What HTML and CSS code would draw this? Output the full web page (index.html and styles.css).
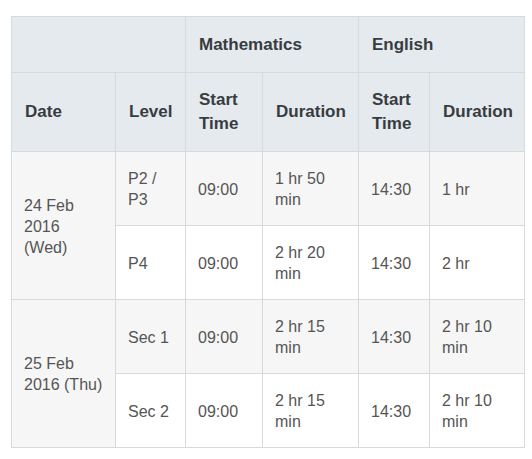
FILE: index.html
```html
<!DOCTYPE html>
<html>
<head>
<meta charset="utf-8">
<link rel="stylesheet" href="styles.css">
</head>
<body>
<div class="wrap">
<table class="schedule">
  <colgroup>
    <col class="c-date"><col class="c-level"><col class="c-start"><col class="c-dur"><col class="c-start2"><col class="c-dur2">
  </colgroup>
  <thead>
    <tr class="top">
      <th colspan="2"></th>
      <th colspan="2">Mathematics</th>
      <th colspan="2">English</th>
    </tr>
    <tr class="sub">
      <th>Date</th>
      <th>Level</th>
      <th>Start Time</th>
      <th class="nw">Duration</th>
      <th>Start Time</th>
      <th class="nw">Duration</th>
    </tr>
  </thead>
  <tbody>
    <tr class="odd">
      <td rowspan="2">24 Feb 2016 (Wed)</td>
      <td>P2 / P3</td>
      <td>09:00</td>
      <td>1 hr 50 min</td>
      <td>14:30</td>
      <td>1 hr</td>
    </tr>
    <tr class="even">
      <td>P4</td>
      <td>09:00</td>
      <td>2 hr 20 min</td>
      <td>14:30</td>
      <td>2 hr</td>
    </tr>
    <tr class="odd">
      <td rowspan="2">25 Feb 2016 (Thu)</td>
      <td>Sec 1</td>
      <td>09:00</td>
      <td>2 hr 15 min</td>
      <td>14:30</td>
      <td>2 hr 10 min</td>
    </tr>
    <tr class="even">
      <td>Sec 2</td>
      <td>09:00</td>
      <td>2 hr 15 min</td>
      <td>14:30</td>
      <td>2 hr 10 min</td>
    </tr>
  </tbody>
</table>
</div>
</body>
</html>
```

FILE: styles.css
```css
html, body {
  margin: 0;
  padding: 0;
  background: #ffffff;
}
.wrap {
  padding: 16px 8px 0 11px;
}
.schedule {
  border-collapse: collapse;
  table-layout: fixed;
  width: 513px;
  font-family: "Liberation Sans", Arial, sans-serif;
}
.c-date { width: 104px; }
.c-level { width: 70px; }
.c-start { width: 77px; }
.c-dur { width: 96px; }
.c-start2 { width: 71px; }
.c-dur2 { width: 95px; }

.schedule th,
.schedule td {
  border: 1px solid #d6dadd;
  text-align: left;
  vertical-align: middle;
}
.schedule th {
  background: #e4eaee;
  color: #383c40;
  font-weight: bold;
  font-size: 17px;
  line-height: 24px;
  padding: 15px 11px 15px 13px;
}
.schedule tr.top th {
  padding-top: 16px;
  padding-bottom: 15px;
}
.schedule th.nw {
  white-space: nowrap;
}
.schedule td {
  color: #555555;
  font-size: 16px;
  line-height: 21px;
  padding: 16px 11px 15px 12px;
}
.schedule tr.odd td {
  background: #f6f6f6;
}
.schedule tr.even td {
  background: #ffffff;
}
```
